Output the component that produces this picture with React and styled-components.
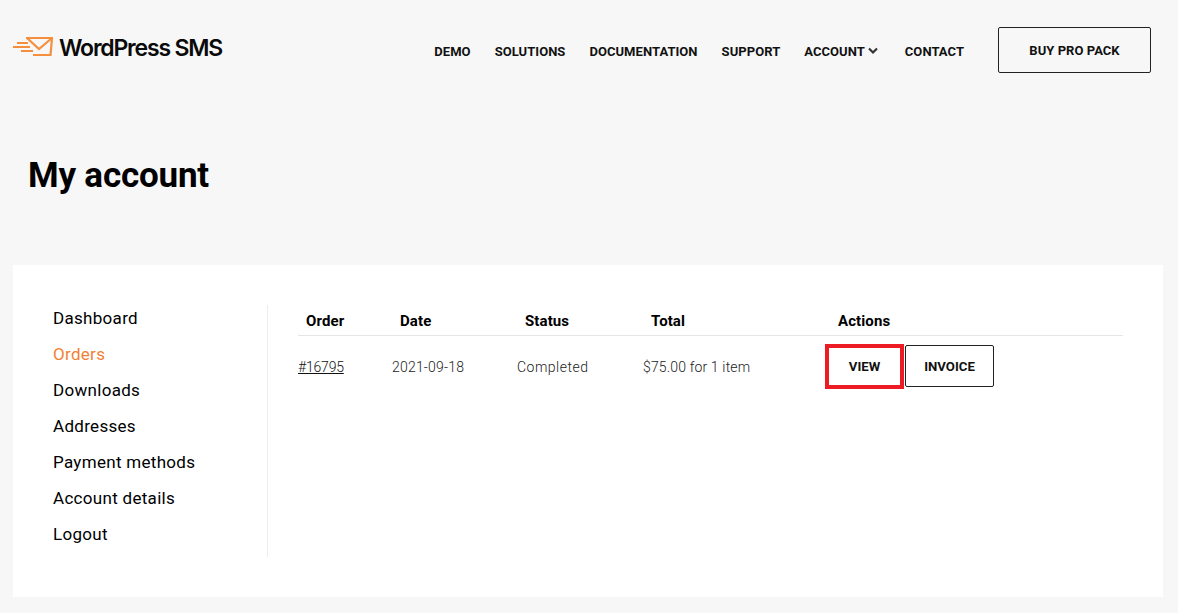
import React from "react";
import styled, { createGlobalStyle } from "styled-components";

const Global = createGlobalStyle`
  html, body { margin: 0; padding: 0; background: #f7f7f7; }
  body { font-family: Roboto, "Liberation Sans", sans-serif; color: #000; }
`;
const Page = styled.div`
  width: 1178px; height: 613px; overflow: hidden; background: #f7f7f7;
  display: flex; flex-direction: column;
`;
const Header = styled.header`
  height: 100px; box-sizing: border-box; padding: 27px 27px 0 13px;
  display: flex; align-items: flex-start; justify-content: space-between;
`;
const Logo = styled.div`
  display: flex; align-items: center; gap: 6px; height: 42px;
`;
const LogoText = styled.span`
  font-family: Inter, sans-serif; font-size: 23px; font-weight: 600; letter-spacing: -1.2px; color: #0a0a0a;
`;
const Nav = styled.nav`
  display: flex; align-items: center; height: 46px;
`;
const NavLink = styled.a`
  font-size: 13px; font-weight: 700; letter-spacing: 0.05px; color: #111; margin-right: ${p => p.$gap}px;
  display: flex; align-items: center; gap: 3px; position: relative; top: 1px; white-space: nowrap;
`;
const BuyButton = styled.a`
  width: 153px; height: 46px; box-sizing: border-box; margin-left: 10px;
  border: 1px solid #222; border-radius: 2px;
  display: flex; align-items: center; justify-content: center;
  font-size: 13px; font-weight: 700; color: #111; letter-spacing: 0.05px;
`;
const Title = styled.h1`
  margin: 0; padding: 55px 0 0 28px; height: 165px; box-sizing: border-box;
  font-size: 35px; font-weight: 700; line-height: 42px; letter-spacing: -0.2px;
`;
const Card = styled.section`
  margin-left: 13px; width: 1150px; height: 332px; box-sizing: border-box; background: #fff;
  padding: 40px; display: flex;
`;
const Side = styled.ul`
  list-style: none; margin: 0; padding: 0; width: 215px; height: 252px; box-sizing: border-box;
  border-right: 1px solid #ededed;
`;
const SideItem = styled.li`
  height: 36px; line-height: 26px; font-size: 17px; letter-spacing: 0.3px; color: ${p => (p.$active ? "#f37f37" : "#000")};
`;
const Orders = styled.div`
  margin-left: 30px; width: 825px;
`;
const Row = styled.div`
  display: grid; grid-template-columns: 94px 125px 126px 184px 1fr; align-items: center;
`;
const HeadRow = styled(Row)`
  height: 30px; border-bottom: 1px solid #e6e6e6;
`;
const Th = styled.div`
  padding-left: ${p => p.$left}px; padding-top: 2px; font-size: 15px; font-weight: 700; color: #000; letter-spacing: 0.1px;
`;
const BodyRow = styled(Row)`
  height: 62px;
`;
const Td = styled.div`
  font-size: 14px; font-weight: 300; color: #222; letter-spacing: ${p => p.$track}px;
`;
const OrderLink = styled.a`
  color: #111; text-decoration: underline;
`;
const Actions = styled.div`
  display: flex; align-items: center; gap: 1px; margin: 0 0 2px -2px;
`;
const ActionButton = styled.a`
  box-sizing: border-box; display: flex; align-items: center; justify-content: center;
  font-size: 13.2px; font-weight: 700; color: #111; background: #fff;
  width: ${p => p.$w}px; height: ${p => p.$h}px;
  border: ${p => p.$highlight ? "4px solid #ed1c24" : "1px solid #222"};
  border-radius: ${p => p.$highlight ? 0 : 2}px;
`;

const Mail = () => (
  <svg width="40" height="26" viewBox="0 0 40 26" fill="none" stroke="#f58f3e" strokeWidth="2.2">
    <path d="M13 3 H39 L37.5 20 H20" />
    <path d="M14 3 L26 14 L39 3" />
    <path d="M4 8 H15 M0 12 H17 M8 16 H20" strokeWidth="2" />
  </svg>
);
const Chevron = () => (
  <svg width="10" height="8" viewBox="0 0 10 8" fill="none" stroke="#333" strokeWidth="2.2">
    <path d="M1 1.5 L5 5.5 L9 1.5" />
  </svg>
);

const menu = ["Dashboard", "Orders", "Downloads", "Addresses", "Payment methods", "Account details", "Logout"];

export default function App() {
  return (
    <Page>
      <Global />
      <Header>
        <Logo><Mail /><LogoText>WordPress SMS</LogoText></Logo>
        <Nav>
          <NavLink $gap={24}>DEMO</NavLink>
          <NavLink $gap={24}>SOLUTIONS</NavLink>
          <NavLink $gap={24}>DOCUMENTATION</NavLink>
          <NavLink $gap={24}>SUPPORT</NavLink>
          <NavLink $gap={27}>ACCOUNT <Chevron /></NavLink>
          <NavLink $gap={24}>CONTACT</NavLink>
          <BuyButton>BUY PRO PACK</BuyButton>
        </Nav>
      </Header>
      <Title>My account</Title>
      <Card>
        <Side>
          {menu.map(m => <SideItem key={m} $active={m === "Orders"}>{m}</SideItem>)}
        </Side>
        <Orders>
          <HeadRow>
            <Th $left={8}>Order</Th><Th $left={8}>Date</Th><Th $left={8}>Status</Th><Th $left={8}>Total</Th><Th $left={11}>Actions</Th>
          </HeadRow>
          <BodyRow>
            <Td $track={-0.2}><OrderLink>#16795</OrderLink></Td>
            <Td $track={0.2}>2021-09-18</Td>
            <Td $track={0.5}>Completed</Td>
            <Td $track={0.15}>$75.00 for 1 item</Td>
            <Actions>
              <ActionButton $highlight $w={79} $h={45}>VIEW</ActionButton>
              <ActionButton $w={89} $h={42}>INVOICE</ActionButton>
            </Actions>
          </BodyRow>
        </Orders>
      </Card>
    </Page>
  );
}
